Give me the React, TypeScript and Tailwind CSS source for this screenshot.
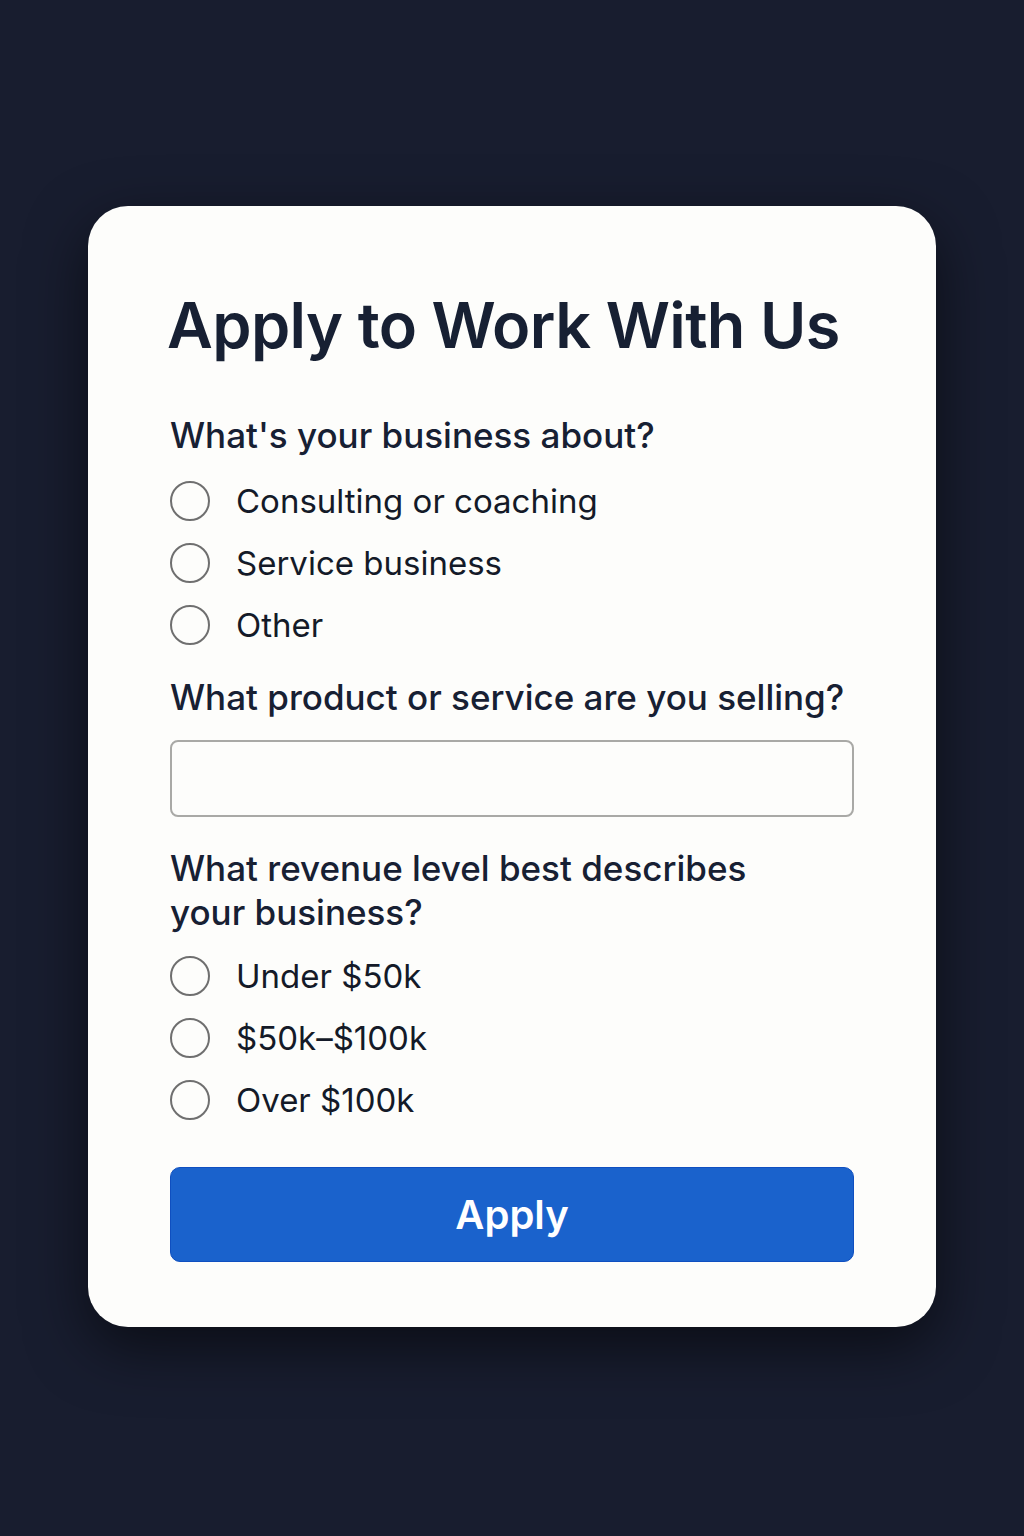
import { useState } from "react";

const businessTypes = ["Consulting or coaching", "Service business", "Other"];
const revenueLevels = ["Under $50k", "$50k–$100k", "Over $100k"];

function RadioOption({
  label,
  checked,
  onSelect,
}: {
  label: string;
  checked: boolean;
  onSelect: () => void;
}) {
  return (
    <button
      type="button"
      onClick={onSelect}
      className="flex h-[62px] w-full items-center gap-[26px] text-left"
    >
      <span className="flex h-[40px] w-[40px] shrink-0 items-center justify-center rounded-full border-2 border-[#6f6f6f] bg-[#fdfdfb]">
        {checked && <span className="h-[20px] w-[20px] rounded-full bg-[#1a62cc]" />}
      </span>
      <span className="text-[33px] leading-none text-[#141a28]">{label}</span>
    </button>
  );
}

export default function App() {
  const [business, setBusiness] = useState<string | null>(null);
  const [revenue, setRevenue] = useState<string | null>(null);
  const [product, setProduct] = useState("");

  return (
    <div
      className="flex min-h-[1536px] w-full justify-center bg-[#181d2f] pt-[206px]"
      style={{ fontFamily: "Inter, 'Noto Sans', sans-serif" }}
    >
      <div className="h-fit w-[848px] rounded-[40px] bg-[#fdfdfb] px-[82px] pb-[65px] pt-[87px] shadow-[0_20px_60px_rgba(0,0,0,0.55)]">
        {/* Title */}
        <h1 className="-ml-[3px] h-[64px] text-[63px] font-semibold leading-[64px] tracking-[-0.01em] text-[#172033]">
          Apply to Work With Us
        </h1>

        {/* Business type */}
        <p className="mt-[56px] text-[35px] font-medium leading-[44px] text-[#172033]">
          What's your business about?
        </p>
        <div className="mt-[13px] flex flex-col">
          {businessTypes.map((t) => (
            <RadioOption key={t} label={t} checked={business === t} onSelect={() => setBusiness(t)} />
          ))}
        </div>

        {/* Product */}
        <p className="mt-[19px] text-[35px] font-medium leading-[44px] text-[#172033]">
          What product or service are you selling?
        </p>
        <input
          value={product}
          onChange={(e) => setProduct(e.target.value)}
          className="mt-[21px] block h-[77px] w-full rounded-[8px] border-2 border-[#a9a9a6] bg-[#fdfdfb] px-4 text-[30px] outline-none"
        />

        {/* Revenue */}
        <p className="mt-[29px] text-[35px] font-medium leading-[44px] text-[#172033]">
          What revenue level best describes
          <br />
          your business?
        </p>
        <div className="mt-[11px] flex flex-col">
          {revenueLevels.map((r) => (
            <RadioOption key={r} label={r} checked={revenue === r} onSelect={() => setRevenue(r)} />
          ))}
        </div>

        {/* Submit */}
        <button
          type="button"
          className="mt-[36px] h-[95px] w-full rounded-[10px] border border-[#0f4fc0] bg-[#1a62cc] text-[40px] font-semibold text-white"
        >
          Apply
        </button>
      </div>
    </div>
  );
}
